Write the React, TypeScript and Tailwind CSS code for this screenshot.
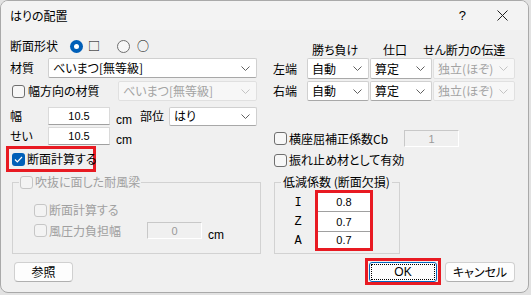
import React from 'react';

const Chevron = ({ disabled }: { disabled?: boolean }) => (
  <svg width="9" height="5" viewBox="0 0 9 5" className="shrink-0">
    <path d="M0.5 0.5L4.5 4.5L8.5 0.5" fill="none" stroke={disabled ? '#c4c4c4' : '#606060'} strokeWidth="1" />
  </svg>
);

interface SelectProps {
  value: string;
  className: string;
  disabled?: boolean;
}

const Select: React.FC<SelectProps> = ({ value, className, disabled }) => (
  <div
    className={`${className} flex items-center justify-between rounded-[2px] border pl-[4px] pr-[6px] ${
      disabled ? 'border-[#e0e0e0] bg-[#f7f7f7] text-[#a3a3a3]' : 'border-[#d0d0d0] border-b-[#a8a8a8] bg-white text-black'
    }`}
  >
    <span className="truncate">{value}</span>
    <Chevron disabled={disabled} />
  </div>
);

const Check = ({ checked, disabled }: { checked?: boolean; disabled?: boolean }) =>
  checked ? (
    <span className="flex h-[13px] w-[13px] shrink-0 items-center justify-center rounded-[3px] bg-[#005fb8]">
      <svg width="9" height="7" viewBox="0 0 9 7">
        <path d="M1 3.5L3.3 5.8L8 1" fill="none" stroke="white" strokeWidth="1.2" />
      </svg>
    </span>
  ) : (
    <span
      className={`block h-[13px] w-[13px] shrink-0 rounded-[3px] border ${
        disabled ? 'border-[#c6c6c6] bg-[#f3f3f3]' : 'border-[#6f6f6f] bg-[#f7f7f7]'
      }`}
    />
  );

const TextBox = ({ value, className, disabled }: { value: string; className: string; disabled?: boolean }) => (
  <div
    className={`${className} flex items-center justify-center border font-['Liberation_Sans',sans-serif] text-[11px] ${
      disabled ? 'border-[#c8c8c8] border-b-white border-r-white bg-[#f0f0f0] text-[#9a9a9a]' : 'border-[#dadada] border-b-[#a0a0a0] bg-white text-black'
    }`}
  >
    {value}
  </div>
);

const Cm = () => <span className="ml-[6px] pt-[8px] font-['Liberation_Sans',sans-serif] text-[12px] leading-none">cm</span>;

export default function App() {
  return (
    <div className="h-[295px] w-[531px] bg-[#e2e2e2] font-['Noto_Sans_CJK_JP','Noto_Sans',sans-serif] text-[12px] leading-[16px] text-black [font-feature-settings:'palt']">
      <div className="h-[293px] w-[529px] overflow-hidden rounded-[8px] border border-[#a9a9a9] bg-[#f0f0f0]">
        {/* title bar */}
        <div className="flex h-[29px] items-center bg-[#f3f3f3] pl-[9px]">
          <span className="text-[12px]">はりの配置</span>
          <span className="ml-auto font-['Liberation_Sans',sans-serif] text-[13px]">?</span>
          <svg width="11" height="11" viewBox="0 0 11 11" className="ml-[31px] mr-[20px]">
            <path d="M0.5 0.5L10.5 10.5M10.5 0.5L0.5 10.5" stroke="#202020" strokeWidth="1" />
          </svg>
        </div>

        <div className="pl-[9px]">
          <div className="flex">
            {/* left column */}
            <div className="w-[251px]">
              <div className="mt-[8px] flex h-[16px] items-center">
                <span>断面形状</span>
                <span className="ml-[12px] flex h-[13px] w-[13px] items-center justify-center rounded-full bg-[#005fb8]">
                  <span className="h-[5px] w-[5px] rounded-full bg-white" />
                </span>
                <span className="ml-[5px]">□</span>
                <span className="ml-[17px] h-[13px] w-[13px] rounded-full border border-[#6f6f6f] bg-[#f7f7f7]" />
                <span className="ml-[7px]">○</span>
              </div>
              <div className="mt-[4px] flex h-[20px] items-center">
                <span className="w-[38px]">材質</span>
                <Select value="べいまつ[無等級]" className="h-[20px] w-[209px]" />
              </div>
              <div className="mt-[3px] flex h-[20px] items-center">
                <span className="ml-[2px]">
                  <Check />
                </span>
                <span className="ml-[3px] w-[90px]">幅方向の材質</span>
                <Select value="べいまつ[無等級]" className="h-[20px] w-[139px]" disabled />
              </div>
              <div className="mt-[6px] flex h-[18px] items-center">
                <span className="w-[38px]">幅</span>
                <TextBox value="10.5" className="h-[18px] w-[62px]" />
                <Cm />
                <span className="ml-[8px]">部位</span>
                <Select value="はり" className="ml-[5px] h-[19px] w-[88px]" />
              </div>
              <div className="mt-[2px] flex h-[18px] items-center">
                <span className="w-[38px]">せい</span>
                <TextBox value="10.5" className="h-[18px] w-[62px]" />
                <Cm />
              </div>
              <div className="ml-[-4px] mt-[1px] flex h-[26px] w-[90px] items-center border-[3px] border-[#e81a22] pl-[3px]">
                <Check checked />
                <span className="ml-[2px] whitespace-nowrap">断面計算する</span>
              </div>
              <fieldset className="ml-[2px] mt-[2px] h-[80px] w-[249px] border border-[#d2d2d2]">
                <legend className="ml-[6px] flex items-center px-[1px] text-[#a0a0a0]">
                  <Check disabled />
                  <span className="ml-[2px]">吹抜に面した耐風梁</span>
                </legend>
                <div className="mt-[12px] flex h-[16px] items-center pl-[21px] text-[#a0a0a0]">
                  <Check disabled />
                  <span className="ml-[2px]">断面計算する</span>
                </div>
                <div className="mt-[4px] flex h-[17px] items-center pl-[21px]">
                  <Check disabled />
                  <span className="ml-[2px] w-[98px] text-[#a0a0a0]">風圧力負担幅</span>
                  <TextBox value="0" className="h-[17px] w-[55px]" disabled />
                  <Cm />
                </div>
              </fieldset>
            </div>

            {/* right column */}
            <div className="ml-[12px] w-[243px]">
              <div className="mt-[12px] flex h-[16px] items-center">
                <span className="ml-[39px] w-[71px]">勝ち負け</span>
                <span className="w-[40px]">仕口</span>
                <span>せん断力の伝達</span>
              </div>
              <div className="flex h-[21px] items-center">
                <span className="w-[34px]">左端</span>
                <Select value="自動" className="h-[21px] w-[62px]" />
                <Select value="算定" className="ml-[1px] h-[21px] w-[62px]" />
                <Select value="独立(ほぞ)" className="ml-[1px] h-[21px] w-[82px]" disabled />
              </div>
              <div className="mt-[2px] flex h-[20px] items-center">
                <span className="w-[34px]">右端</span>
                <Select value="自動" className="h-[20px] w-[62px]" />
                <Select value="算定" className="ml-[1px] h-[20px] w-[62px]" />
                <Select value="独立(ほぞ)" className="ml-[1px] h-[20px] w-[82px]" disabled />
              </div>
              <div className="mt-[29px] flex h-[17px] items-center">
                <span className="ml-[1px]">
                  <Check />
                </span>
                <span className="ml-[2px] w-[115px] whitespace-nowrap">横座屈補正係数Cb</span>
                <TextBox value="1" className="h-[17px] w-[55px]" disabled />
              </div>
              <div className="mt-[5px] flex h-[16px] items-center">
                <span className="ml-[1px]">
                  <Check />
                </span>
                <span className="ml-[2px]">振れ止め材として有効</span>
              </div>
              <fieldset className="ml-[1px] mt-[6px] h-[80px] w-[126px] border border-[#d2d2d2]">
                <legend className="ml-[6px] px-[2px]">低減係数 (断面欠損)</legend>
                <div className="flex">
                  <div className="flex w-[40px] flex-col pl-[6px] pt-[3px] font-['Liberation_Mono',monospace] text-[12px]">
                    <span className="flex h-[19px] items-center justify-center">I</span>
                    <span className="flex h-[20px] items-center justify-center">Z</span>
                    <span className="flex h-[17px] items-center justify-center">A</span>
                  </div>
                  <div className="flex w-[58px] flex-col border-[3px] border-[#e81a22] bg-white font-['Liberation_Sans',sans-serif] text-[11px]">
                    <span className="flex h-[19px] items-center justify-center border-b border-[#a0a0a0]">0.8</span>
                    <span className="flex h-[20px] items-center justify-center border-b border-[#a0a0a0]">0.7</span>
                    <span className="flex h-[16px] items-center justify-center">0.7</span>
                  </div>
                </div>
              </fieldset>
            </div>
          </div>

          {/* buttons */}
          <div className="mt-[4px] flex h-[27px] w-[505px] items-center">
            <button className="ml-[4px] h-[20px] w-[59px] rounded-[4px] border border-[#d0d0d0] border-b-[#b0b0b0] bg-[#fdfdfd] text-[12px] leading-none">
              参照
            </button>
            <div className="ml-auto flex h-[27px] w-[76px] items-center justify-center border-[3px] border-[#e81a22]">
              <button className="flex h-[20px] w-[68px] items-center justify-center rounded-[3px] border border-[#0067c0] bg-[#fdfdfd] p-[1px]">
                <span className="flex h-full w-full items-center justify-center border border-dotted border-black font-['Liberation_Sans',sans-serif] text-[12px] leading-none">
                  OK
                </span>
              </button>
            </div>
            <button className="ml-[4px] h-[20px] w-[70px] rounded-[4px] border border-[#d0d0d0] border-b-[#b0b0b0] bg-[#fdfdfd] text-[12px] leading-none">
              キャンセル
            </button>
          </div>
        </div>
      </div>
    </div>
  );
}
